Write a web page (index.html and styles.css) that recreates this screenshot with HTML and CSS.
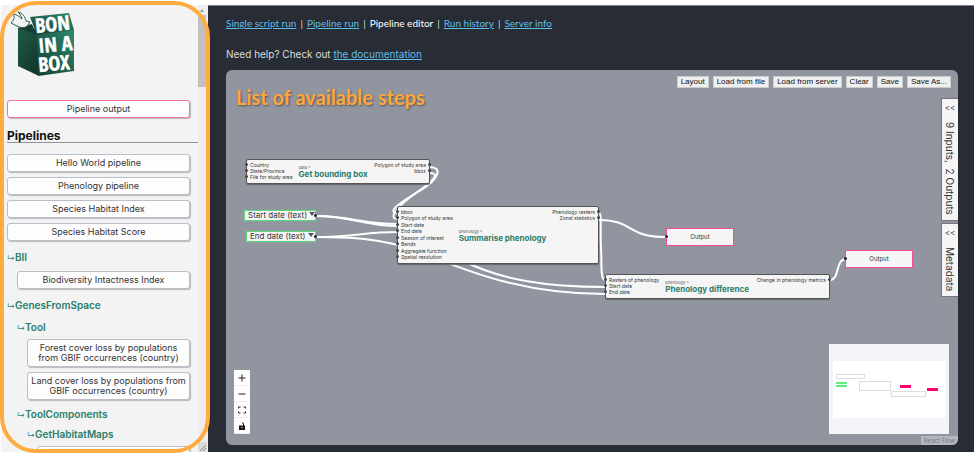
FILE: index.html
```html
<!DOCTYPE html>
<html lang="en">
<head>
<meta charset="utf-8">
<title>BON in a Box - Pipeline editor</title>
<link rel="stylesheet" href="styles.css">
</head>
<body>
<div class="app">
  <aside class="sidebar">
    <div class="steps">
      <svg class="logo" viewBox="0 0 62 68" role="img" aria-label="BON in a Box">
        <defs>
          <linearGradient id="side" x1="0" y1="0" x2="0.6" y2="1"><stop offset="0" stop-color="#1f5f4c"/><stop offset="1" stop-color="#14382c"/></linearGradient>
          <linearGradient id="front" x1="1" y1="0" x2="0" y2="1"><stop offset="0" stop-color="#2f8c70"/><stop offset="0.5" stop-color="#1f6350"/><stop offset="1" stop-color="#153e31"/></linearGradient>
        </defs>
        <path d="M7 18 20 15 28 24 28 66 7 56Z" fill="url(#side)"/>
        <path d="M7 18 21 14 25 24Z" fill="#173c31"/>
        <path d="M26 24 63 19V61L27 66Z" fill="url(#front)"/>
        <path d="M19 7 58 3 63 20 26 25Z" fill="url(#front)"/>
        <path d="M1 14C6 9 4 7 2 5 6 5 9 7 12 10 11 6 9 4 8 3 13 4 15 8 16 12L20 13C17 19 13 20 7 17L1 14Z" transform="translate(-1 -1)" fill="#f2f3f2" stroke="#245f4d" stroke-width="1"/>
        <g class="logo-text">
          <text x="25" y="23" transform="rotate(-6 25 23)">BON</text>
          <text x="28" y="43" transform="rotate(-5 28 43)">IN A</text>
          <text x="28" y="62" transform="rotate(-5 28 62)">BOX</text>
        </g>
      </svg>
      <button class="step output">Pipeline output</button>
      <h3 class="heading">Pipelines</h3>
      <div class="group">
        <button class="step">Hello World pipeline</button>
        <button class="step">Phenology pipeline</button>
        <button class="step">Species Habitat Index</button>
        <button class="step">Species Habitat Score</button>
      </div>
      <p class="folder"><span class="arrow">↳</span>BII</p>
      <div class="group nested"><button class="step">Biodiversity Intactness Index</button></div>
      <p class="folder"><span class="arrow">↳</span>GenesFromSpace</p>
      <div class="nested">
        <p class="folder"><span class="arrow">↳</span>Tool</p>
        <div class="group nested">
          <button class="step">Forest cover loss by populations<br>from GBIF occurrences (country)</button>
          <button class="step">Land cover loss by populations from<br>GBIF occurrences (country)</button>
        </div>
        <p class="folder"><span class="arrow">↳</span>ToolComponents</p>
        <div class="nested">
          <p class="folder"><span class="arrow">↳</span>GetHabitatMaps</p>
          <div class="group nested"><button class="step" aria-label="Habitat map step"></button></div>
        </div>
      </div>
    </div>
    <div class="scrollbar">
      <svg class="scroll-arrow" viewBox="0 0 8 10"><path d="M2 7 4 4 6 7Z" fill="#999"/></svg>
      <div class="thumb"></div>
      <svg class="grip" viewBox="0 0 9 10"><path d="M2 9 8 3M5 9 8 6" stroke="#888"/></svg>
    </div>
  </aside>
  <main class="main">
    <nav class="nav"><a href="#script">Single script run</a><span>|</span><a href="#run">Pipeline run</a><span>|</span><span class="current">Pipeline editor</span><span>|</span><a href="#history">Run history</a><span>|</span><a href="#server">Server info</a></nav>
    <p class="help">Need help? Check out <a href="#docs">the documentation</a></p>
    <section class="canvas">
      <div class="toolbar">
        <button>Layout</button><button>Load from file</button><button>Load from server</button><button>Clear</button><button>Save</button><button>Save As...</button>
      </div>
      <h2 class="callout">List of available steps</h2>
      <svg class="edges" width="732" height="376">
        <path d="M203 97C218 97 212 110 195 120S158 143 172 143"/>
        <path d="M203 103C216 103 206 112 190 123S160 149 172 149"/>
        <path d="M90 146C125 146 140 156 172 156"/>
        <path d="M90 146C125 146 135 154 172 154"/>
        <path d="M90 167C125 167 140 162 172 162"/>
        <path d="M90 167C130 167 145 169 172 175 210 184 270 224 379 224"/>
        <path d="M235 190C275 210 320 217 379 217"/>
        <path d="M373 143C376 143 374 160 375 177S374 210 379 210"/>
        <path d="M373 150C408 150 400 167 440 167"/>
        <path d="M604 210C614 210 609 189 620 189"/>
      </svg>
      <article class="node box">
        <ul class="ports"><li>Country</li><li>State/Province</li><li>File for study area</li></ul>
        <div class="label"><small>data &gt;</small><strong>Get bounding box</strong></div>
        <ul class="ports out"><li>Polygon of study area</li><li>bbox</li></ul>
      </article>
      <article class="node summary">
        <ul class="ports"><li>bbox</li><li>Polygon of study area</li><li>Start date</li><li>End date</li><li>Season of interest</li><li>Bands</li><li>Aggregate function</li><li>Spatial resolution</li></ul>
        <div class="label"><small>phenology &gt;</small><strong>Summarise phenology</strong></div>
        <ul class="ports out"><li>Phenology rasters</li><li>Zonal statistics</li></ul>
      </article>
      <article class="node difference">
        <ul class="ports"><li>Rasters of phenology</li><li>Start date</li><li>End date</li></ul>
        <div class="label"><small>phenology &gt;</small><strong>Phenology difference</strong></div>
        <ul class="ports out"><li>Change in phenology metrics</li></ul>
      </article>
      <div class="constant start">Start date (text)<i></i></div>
      <div class="constant end">End date (text)<i></i></div>
      <div class="result first">Output</div>
      <div class="result second">Output</div>
      <div class="tabs">
        <button class="tab"><span>&lt;&lt;</span><span class="tab-name">9 Inputs,&nbsp; 2 Outputs</span></button>
        <button class="tab"><span>&lt;&lt;</span><span class="tab-name">Metadata</span></button>
      </div>
      <div class="controls">
        <button aria-label="Zoom in"><svg viewBox="0 0 8 8"><path d="M4 .5V7.5M.5 4H7.5"/></svg></button>
        <button aria-label="Zoom out"><svg viewBox="0 0 8 8"><path d="M.5 4H7.5"/></svg></button>
        <button aria-label="Fit view"><svg viewBox="0 0 8 8"><path d="M.5 2.5V1H2.5M5.5 1H7.5V2.5M7.5 5.5V7H5.5M2.5 7H.5V5.5"/></svg></button>
        <button aria-label="Lock"><svg viewBox="0 0 8 8"><path d="M1 3.5H7V8H1Z" fill="#111" stroke="none"/><path d="M5.5 4V2Q5.5 .8 4 .6"/><circle cx="4" cy="5.7" r=".6" fill="#fff" stroke="none"/></svg></button>
      </div>
      <svg class="minimap" viewBox="0 0 120 90">
        <rect x="4" y="17" width="112" height="57" fill="#fff"/>
        <g fill="#fff" stroke="#ddd"><rect x="7.5" y="30.500" width="28" height="4"/><rect x="30.500" y="37.500" width="31" height="9"/><rect x="62.500" y="47.500" width="34" height="5"/></g>
        <path d="M7 38H18V40H7ZM7 41H18V43H7Z" fill="#5fee7e"/>
        <path d="M71 41H82V44H71ZM98 44H109V47H98Z" fill="#ff0073"/>
      </svg>
      <a class="attribution" href="#flow">React Flow</a>
    </section>
  </main>
  <div class="highlight"></div>
</div>
</body>
</html>
```
FILE: styles.css
```css
* { box-sizing: border-box; }
body { margin: 0; background: #fff; font-family: Inter, "Open Sans", sans-serif; }
button { font-family: inherit; margin: 0; }
p, h2, h3, ul { margin: 0; padding: 0; }

.app { position: relative; display: flex; height: 100vh; padding: 5px 1px 1px; background: #fff; }
.sidebar { display: flex; flex: 0 0 207px; overflow: hidden; background: #f2f3f2; }
.steps { flex: 1; min-width: 0; padding-left: 6px; }
.logo { display: block; width: 62px; height: 68px; margin: 5px 0 22px 4px; overflow: visible; }
.logo-text { fill: #fff; stroke: #fff; stroke-width: 0.5; font: bold 20px "Liberation Sans Narrow", "Open Sans Condensed", "DejaVu Sans Condensed", sans-serif; }
.step { display: block; width: 100%; min-height: 18px; padding: 3px 2px; border: 1px solid #bdbdca; border-radius: 3px; background: #fdfdfd; box-shadow: 1px 1px 1px #bbb; color: #333; font-size: 9px; line-height: 10px; text-align: center; white-space: nowrap; }
.output { width: calc(100% - 8px); border-color: #ee75b0; }
.heading { height: 25px; padding-top: 11px; border-bottom: 1px solid #92949c; color: #111; font-size: 12px; line-height: 14px; }
.group { display: flex; flex-direction: column; gap: 5px; padding-right: 8px; }
.heading + .group { padding-top: 11px; }
.nested { padding-left: 10px; }
.folder { padding: 4px 0 7px; color: #297e6c; font-size: 10px; font-weight: 600; line-height: 8px; }
.group + .folder { padding-top: 10px; }
.steps > .folder { padding: 12px 0 9px; }
.arrow { display: inline-block; width: 8px; font-size: 8px; font-weight: 400; }
.scrollbar { display: flex; flex: 0 0 10px; flex-direction: column; background: #ededf0; }
.scroll-arrow { width: 8px; height: 10px; }
.thumb { width: 8px; height: 72px; background: #c1c1c1; }
.grip { width: 9px; height: 10px; margin-top: auto; background: #dcdcdc; }

.main { display: flex; flex: 1; flex-direction: column; min-width: 0; padding: 9px 16px 7px 18px; border-top: 1px solid #81868c; background: #282c34; color: #ddd; }
.nav { display: flex; gap: 4px; font: 10px/16px Lato, sans-serif; white-space: nowrap; }
.main a { color: #61bdea; }
.current { color: #fff; }
.help { padding: 16px 0 9px; font-size: 10px; line-height: 14px; }
.canvas { position: relative; flex: 1; overflow: hidden; border-radius: 6px; background: #9195a0; color: #333; }
.toolbar { display: flex; justify-content: flex-end; gap: 4px; padding: 6px 7px 0; }
.toolbar button { height: 12px; padding: 0 3px; border: 1px solid #ccc; background: #efefef; color: #111; font: 8px/10px "Liberation Sans", sans-serif; }
.callout { padding: 0 10px; color: #ffa63d; font: bold 20px/18px Lato, sans-serif; text-shadow: 1px 1px 2px #555; }
.edges { position: absolute; inset: 0; fill: none; stroke: #fff; stroke-width: 2; }

.node { position: absolute; display: flex; border: 1px solid #555; border-radius: 2px; background: #f5f5f5; box-shadow: 0 1px 1px #666; }
.box { left: 20px; top: 89px; width: 184px; height: 25px; }
.summary { left: 171px; top: 136px; width: 202px; height: 58px; }
.difference { left: 379px; top: 204px; width: 225px; height: 25px; }
.ports { display: flex; flex-direction: column; justify-content: space-between; padding: 2px 0 3px; list-style: none; font-size: 5px; line-height: 6px; white-space: nowrap; }
.ports li { position: relative; height: 6px; padding: 0 3px; }
.ports li::before { position: absolute; left: -2px; top: 1px; width: 3px; height: 3px; border-radius: 50%; background: #444; content: ""; }
.out { justify-content: flex-start; margin-left: auto; text-align: right; }
.out li::before { right: -2px; left: auto; }
.label { display: flex; flex-direction: column; justify-content: center; margin-left: 3px; white-space: nowrap; color: #297e6c; font-size: 8px; line-height: 8px; }
.label small { color: #555; font-size: 4px; line-height: 5px; }
.constant { position: absolute; right: 642px; display: flex; align-items: flex-start; height: 11px; padding: 0 2px 0 3px; border: 1px solid #5ed67c; background: #f5f5f5; box-shadow: 0 0 1px #5ed67c; font-size: 8px; line-height: 9px; white-space: nowrap; }
.constant i { margin: 1px 0 0 2px; border: 3px solid transparent; border-top: 4px solid #555; border-bottom: 0; }
.constant::after, .result::before { position: absolute; top: 50%; width: 3px; height: 3px; margin-top: -2px; border-radius: 50%; background: #223; content: ""; }
.constant::after { right: -2px; }
.result::before { left: -2px; }
.start { left: 18px; top: 140px; width: 72px; }
.end { left: 20px; top: 161px; width: 70px; }
.result { position: absolute; width: 68px; height: 18px; border: 1px solid #ee4f98; border-radius: 1px; background: #f5f5f5; box-shadow: 0 0 1px #ee4f98; font-size: 6px; line-height: 16px; text-align: center; }
.first { left: 440px; top: 158px; }
.second { left: 619px; top: 180px; }

.tabs { position: absolute; top: 28px; right: 0; display: flex; flex-direction: column; gap: 2px; }
.tab { display: flex; flex-direction: column; align-items: center; gap: 10px; width: 17px; padding: 5px 0; border: 1px solid #777; border-right: 0; background: #f5f5f5; color: #333; font-size: 8px; line-height: 8px; }
.tab-name { writing-mode: vertical-rl; font-size: 10px; line-height: 12px; white-space: nowrap; }
.controls { position: absolute; left: 8px; bottom: 11px; width: 16px; }
.controls button { display: flex; align-items: center; justify-content: center; width: 16px; height: 16px; padding: 0; border: 0; border-bottom: 1px solid #eee; background: #fefefe; }
.controls svg { width: 8px; height: 8px; fill: none; stroke: #222; }
.minimap { position: absolute; right: 9px; bottom: 11px; width: 120px; height: 90px; background: #f4f5f8; }
.main .attribution { position: absolute; right: 0; bottom: 0; padding: 0 3px; background: #b3b6be; color: #777; font-size: 6px; line-height: 9px; text-decoration: none; }
.highlight { position: absolute; top: 1px; bottom: 0; left: 0; width: 210px; border: 4px solid #ffab40; border-radius: 36px; pointer-events: none; }
```
